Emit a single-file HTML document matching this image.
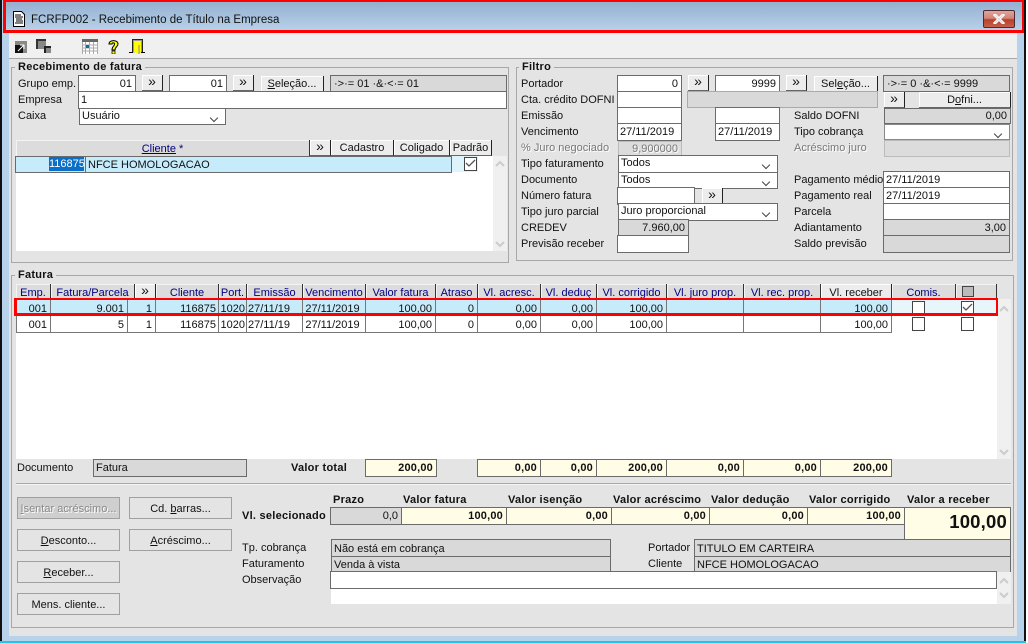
<!DOCTYPE html>
<html><head><meta charset="utf-8">
<style>
html,body{margin:0;padding:0;background:#fff}
#w{position:relative;width:1028px;height:643px;overflow:hidden;background:#fff;font:11px "Liberation Sans",sans-serif;letter-spacing:0;color:#111}
#w div,#w svg{position:absolute;box-sizing:border-box;white-space:nowrap}
.l{height:14px;line-height:14px;margin-top:1px}
.d{color:#777;text-shadow:1px 1px 0 #fff}
.b{font-weight:bold;letter-spacing:.26px}
.i,.g,.y,.s{border:1px solid #6b6b6b;background:#fff;line-height:16px;padding:0 3px;overflow:hidden}
.g{background:#d9d9d9}
.y{background:#fffde6;font-weight:bold;text-align:right;padding-right:3px;letter-spacing:.2px}
.r{text-align:right}
.s{padding-right:18px}
.s:after{content:"";position:absolute;right:8px;top:6px;width:5px;height:5px;border-right:1px solid #444;border-bottom:1px solid #444;transform:rotate(45deg)}
.btn{background:#ececec;border-right:1px solid #222;border-bottom:1px solid #666;box-shadow:inset 1px 1px 0 #fff;text-align:center;line-height:17px}
.x{font-size:14px;line-height:12px}
.h{background:#dcdcdc;color:#000080;text-align:center;line-height:18px;border-right:1px solid #333;box-shadow:inset 1px 1px 0 #f4f4f4;overflow:hidden}
.c{border-right:1px solid #777;border-bottom:1px solid #777;text-align:right;padding-right:3px;line-height:18px;overflow:hidden}
.p{background:#e4e4e4;border:1px solid #a0a0a0;text-align:center;line-height:22px}
.ck{width:13px;height:14px;border:1px solid #444;background:#fff}
.gb{border:1px solid #a8a8a8}
.gt{background:#e4e4e4;font-weight:bold;line-height:14px;padding:0 3px;letter-spacing:.26px}
.red{background:#f00}
u{text-decoration:underline}
</style></head><body><div id="w">
<!-- frame -->
<div style="left:0;top:0;width:2px;height:643px;background:#111"></div>
<div style="left:2px;top:0;width:1023px;height:641px;background:#b8d2ec"></div>
<div style="left:1024px;top:0;width:2px;height:643px;background:#111"></div>
<div style="left:0;top:641px;width:1026px;height:2px;background:#1fc6e6"></div>
<div style="left:4px;top:2px;width:1018px;height:29px;background:linear-gradient(#95b0d0,#b8d2ea)"></div>
<div style="left:9px;top:33px;width:1008px;height:603px;background:#e4e4e4"></div>
<div style="left:9px;top:33px;width:1008px;height:26px;background:#f0f0f0;border-bottom:1px solid #a8a8a8"></div>
<!-- title -->
<svg style="left:13px;top:11px" width="12" height="16" viewBox="0 0 12 16"><path d="M.5.5h8l3 3v12H.5z" fill="#fff" stroke="#000"/><path d="M2 4h6M2 6h8M3 8h6M3 10h7M2 12h8" stroke="#000" stroke-width="1"/></svg>
<div class="l" style="left:31px;top:12px;font-size:11.5px;color:#111">FCRFP002 - Recebimento de Título na Empresa</div>
<div style="left:983px;top:10px;width:32px;height:18px;border:1px solid #4c2a30;border-radius:2px;background:linear-gradient(#e0a49a 0,#d28577 45%,#b8402c 55%,#c4604c 100%)"></div>
<svg style="left:993px;top:14px" width="12" height="10" viewBox="0 0 12 10"><path d="M2 1l8 8M10 1l-8 8" stroke="#fff" stroke-width="3" stroke-linecap="square"/><path d="M2 1l8 8M10 1l-8 8" stroke="#d8d8d8" stroke-width="1"/></svg>
<div class="red" style="left:3px;top:0;width:1021px;height:2px"></div>
<div class="red" style="left:3px;top:30px;width:1021px;height:3px"></div>
<div class="red" style="left:3px;top:0;width:3px;height:33px"></div>
<div class="red" style="left:1022px;top:0;width:2px;height:33px"></div>
<!-- toolbar icons -->
<svg style="left:15px;top:41px" width="12" height="12" viewBox="0 0 12 12"><rect width="12" height="12" fill="#888"/><rect x="0" y="4" width="8" height="8" fill="#111"/><path d="M3 10l6-6M5 4h4v4" stroke="#fff" fill="none"/></svg>
<svg style="left:36px;top:39px" width="15" height="14" viewBox="0 0 15 14"><rect width="10" height="10" fill="#888"/><path d="M0 0h10v2H2v8H0z" fill="#333"/><rect x="8" y="7" width="7" height="7" fill="#888"/><path d="M8 7h7v2h-5v5H8z" fill="#222"/></svg>
<svg style="left:82px;top:39px" width="16" height="15" viewBox="0 0 16 15"><rect width="16" height="15" fill="#fff"/><rect width="16" height="3" fill="#666"/><path d="M0 6h16M0 9h16M0 12h16M3.500 3v12M7.500 3v12M11.500 3v12M15.500 3v12M.5 3v12" stroke="#aaa"/><rect x="4" y="6" width="3" height="3" fill="#146a9c"/></svg>
<svg style="left:108px;top:40px" width="11" height="14" viewBox="0 0 11 14"><path d="M1 4c0-4.500 9-4.500 9 0 0 3-3 2.500-3 6H4c0-4 2.500-3.500 2.500-6 0-1.500-2.500-1.500-2.500 0z" fill="#ff0" stroke="#000"/><rect x="4" y="11" width="3" height="3" fill="#ff0" stroke="#000" stroke-width=".7"/></svg>
<svg style="left:129px;top:39px" width="16" height="15" viewBox="0 0 16 15"><path d="M3.500 13.500V.5h10v13" fill="#999" stroke="#222"/><path d="M5 2h7v11l-2 2-5-2z" fill="#ff0" stroke="none"/><path d="M10 6v9" stroke="#888"/><path d="M0 13.500h4M12 13.500h4" stroke="#000"/></svg>

<!-- Recebimento de fatura -->
<div class="gb" style="left:11px;top:67px;width:498px;height:196px"></div>
<div class="gt" style="left:15px;top:60px">Recebimento de fatura</div>
<div class="l" style="left:18px;top:76px">Grupo emp.</div>
<div class="l" style="left:18px;top:92px">Empresa</div>
<div class="l" style="left:18px;top:108px">Caixa</div>
<div class="i r" style="left:78px;top:75px;width:58px;height:17px">01</div>
<div class="btn x" style="left:142px;top:75px;width:21px;height:16px">»</div>
<div class="i r" style="left:169px;top:75px;width:58px;height:17px">01</div>
<div class="btn x" style="left:233px;top:75px;width:21px;height:16px">»</div>
<div class="btn" style="left:261px;top:76px;width:63px;height:16px"><u>S</u>eleção...</div>
<div class="g" style="left:330px;top:75px;width:177px;height:17px">·&gt;·= 01 ·&amp;·&lt;·= 01</div>
<div class="i" style="left:78px;top:91px;width:429px;height:18px;padding-left:2px">1</div>
<div class="s" style="left:79px;top:108px;width:147px;height:17px;border:1px solid #6b6b6b;background:#fff;line-height:14px;padding-left:2px">Usuário</div>
<div class="h" style="left:16px;top:140px;width:294px;height:16px"><u>Cliente</u> *</div>
<div class="btn x" style="left:310px;top:140px;width:21px;height:16px">»</div>
<div class="btn" style="left:331px;top:140px;width:63px;height:16px">Cadastro</div>
<div class="btn" style="left:394px;top:140px;width:56px;height:16px">Coligado</div>
<div class="btn" style="left:450px;top:140px;width:42px;height:16px">Padrão</div>
<div style="left:16px;top:156px;width:477px;height:95px;background:#fff"></div>
<div style="left:493px;top:156px;width:14px;height:95px;background:#f0f0f0"></div>
<div style="left:15px;top:156px;width:437px;height:17px;background:#c6ecfb;border:1px solid #6b6b6b"></div>
<div style="left:85px;top:156px;width:1px;height:17px;background:#6b6b6b"></div>
<div style="left:49px;top:157px;width:35px;height:14px;background:#0a6fc8;color:#fff;line-height:14px;text-align:right">116875</div>
<div class="l" style="left:88px;top:157px">NFCE HOMOLOGACAO</div>
<div style="left:452px;top:156px;width:26px;height:16px;background:#dff3fb"></div>
<div class="ck" style="left:464px;top:157px"></div>
<svg style="left:465px;top:159px" width="11" height="10" viewBox="0 0 11 10"><path d="M1 4l3 3 6-6" stroke="#555" stroke-width="1.300" fill="none"/></svg>
<svg style="left:495px;top:160px" width="10" height="8" viewBox="0 0 10 8"><path d="M1 6l4-4 4 4" stroke="#ccc" stroke-width="2" fill="none"/></svg>
<svg style="left:495px;top:240px" width="10" height="8" viewBox="0 0 10 8"><path d="M1 2l4 4 4-4" stroke="#ccc" stroke-width="2" fill="none"/></svg>

<!-- Filtro -->
<div class="gb" style="left:516px;top:67px;width:497px;height:194px"></div>
<div class="gt" style="left:519px;top:60px">Filtro</div>
<div class="l" style="left:521px;top:76px">Portador</div>
<div class="l" style="left:521px;top:92px">Cta. crédito DOFNI</div>
<div class="l" style="left:521px;top:108px">Emissão</div>
<div class="l" style="left:521px;top:124px">Vencimento</div>
<div class="l d" style="left:521px;top:140px">% Juro negociado</div>
<div class="l" style="left:521px;top:156px">Tipo faturamento</div>
<div class="l" style="left:521px;top:172px">Documento</div>
<div class="l" style="left:521px;top:188px">Número fatura</div>
<div class="l" style="left:521px;top:204px">Tipo juro parcial</div>
<div class="l" style="left:521px;top:220px">CREDEV</div>
<div class="l" style="left:521px;top:236px">Previsão receber</div>
<div class="l" style="left:794px;top:108px">Saldo DOFNI</div>
<div class="l" style="left:794px;top:124px">Tipo cobrança</div>
<div class="l d" style="left:794px;top:140px">Acréscimo juro</div>
<div class="l" style="left:794px;top:172px">Pagamento médio</div>
<div class="l" style="left:794px;top:188px">Pagamento real</div>
<div class="l" style="left:794px;top:204px">Parcela</div>
<div class="l" style="left:794px;top:220px">Adiantamento</div>
<div class="l" style="left:794px;top:236px">Saldo previsão</div>
<div class="i r" style="left:617px;top:75px;width:65px;height:17px">0</div>
<div class="btn x" style="left:688px;top:75px;width:21px;height:16px">»</div>
<div class="i r" style="left:715px;top:75px;width:65px;height:17px">9999</div>
<div class="btn x" style="left:786px;top:75px;width:21px;height:16px">»</div>
<div class="btn" style="left:814px;top:76px;width:64px;height:16px">Sel<u>e</u>ção...</div>
<div class="g" style="left:883px;top:75px;width:127px;height:17px">·&gt;·= 0 ·&amp;·&lt;·= 9999</div>
<div class="i" style="left:617px;top:91px;width:65px;height:17px"></div>
<div class="g" style="left:687px;top:91px;width:191px;height:17px;border-color:#aaa"></div>
<div class="btn x" style="left:884px;top:92px;width:21px;height:16px">»</div>
<div class="btn" style="left:919px;top:92px;width:92px;height:16px">D<u>o</u>fni...</div>
<div class="i" style="left:617px;top:107px;width:65px;height:17px"></div>
<div class="i" style="left:715px;top:107px;width:65px;height:17px"></div>
<div class="g r" style="left:884px;top:108px;width:127px;height:16px;line-height:15px">0,00</div>
<div class="i" style="left:617px;top:123px;width:65px;height:18px;padding-left:2px">27/11/2019</div>
<div class="i" style="left:715px;top:123px;width:65px;height:18px;padding-left:2px">27/11/2019</div>
<div class="s" style="left:884px;top:124px;width:126px;height:16px;border:1px solid #888;background:#fff"></div>
<div class="g r d" style="left:618px;top:141px;width:64px;height:16px;border-color:#bbb;line-height:15px;background:#dcdcdc">9,900000</div>
<div class="g" style="left:884px;top:140px;width:126px;height:17px;border-color:#bbb;background:#dcdcdc"></div>
<div class="s" style="left:618px;top:155px;width:160px;height:18px;line-height:15px;padding-left:2px;border:1px solid #6b6b6b;background:#fff">Todos</div>
<div class="s" style="left:618px;top:172px;width:160px;height:17px;line-height:14px;padding-left:2px;border:1px solid #6b6b6b;background:#fff">Todos</div>
<div class="i" style="left:617px;top:187px;width:78px;height:18px"></div>
<div class="btn x" style="left:702px;top:188px;width:21px;height:16px">»</div>
<div class="s" style="left:618px;top:203px;width:160px;height:18px;line-height:15px;padding-left:2px;border:1px solid #6b6b6b;background:#fff">Juro proporcional</div>
<div class="g r" style="left:618px;top:219px;width:71px;height:17px;line-height:16px">7.960,00</div>
<div class="i" style="left:617px;top:235px;width:72px;height:18px"></div>
<div class="i" style="left:883px;top:171px;width:127px;height:17px;padding-left:2px">27/11/2019</div>
<div class="i" style="left:883px;top:187px;width:127px;height:17px;padding-left:2px">27/11/2019</div>
<div class="i" style="left:883px;top:203px;width:127px;height:17px"></div>
<div class="g r" style="left:883px;top:219px;width:127px;height:17px">3,00</div>
<div class="g" style="left:883px;top:235px;width:127px;height:18px"></div>

<!-- Fatura -->
<div class="gb" style="left:11px;top:275px;width:1003px;height:353px"></div>
<div class="gt" style="left:15px;top:268px">Fatura</div>
<div class="h" style="left:16px;top:284px;width:35px;height:15px">Emp.</div>
<div class="h" style="left:51px;top:284px;width:84px;height:15px">Fatura/Parcela</div>
<div class="btn x" style="left:135px;top:284px;width:21px;height:15px">»</div>
<div class="h" style="left:156px;top:284px;width:63px;height:15px">Cliente</div>
<div class="h" style="left:219px;top:284px;width:28px;height:15px">Port.</div>
<div class="h" style="left:247px;top:284px;width:56px;height:15px">Emissão</div>
<div class="h" style="left:303px;top:284px;width:63px;height:15px">Vencimento</div>
<div class="h" style="left:366px;top:284px;width:70px;height:15px">Valor fatura</div>
<div class="h" style="left:436px;top:284px;width:42px;height:15px">Atraso</div>
<div class="h" style="left:478px;top:284px;width:63px;height:15px">Vl. acresc.</div>
<div class="h" style="left:541px;top:284px;width:56px;height:15px">Vl. deduç</div>
<div class="h" style="left:597px;top:284px;width:70px;height:15px">Vl. corrigido</div>
<div class="h" style="left:667px;top:284px;width:77px;height:15px">Vl. juro prop.</div>
<div class="h" style="left:744px;top:284px;width:77px;height:15px">Vl. rec. prop.</div>
<div class="btn" style="left:821px;top:284px;width:71px;height:15px;line-height:18px">Vl. receber</div>
<div class="h" style="left:892px;top:284px;width:64px;height:15px">Comis.</div>
<div class="h" style="left:956px;top:284px;width:41px;height:15px"></div>
<div style="left:962px;top:286px;width:12px;height:11px;background:#bbb;border:1px solid #444"></div>
<div style="left:16px;top:299px;width:981px;height:160px;background:#fff"></div>
<div style="left:997px;top:299px;width:14px;height:160px;background:#f0f0f0"></div>
<!-- rows -->
<div style="left:16px;top:299px;width:876px;height:17px;background:#c6ecfb"></div>
<div style="left:892px;top:299px;width:105px;height:17px;background:#e8f6fc"></div>
<div class="c" style="left:16px;top:300px;width:35px;height:16px">001</div>
<div class="c" style="left:51px;top:300px;width:77px;height:16px">9.001</div>
<div class="c" style="left:128px;top:300px;width:28px;height:16px">1</div>
<div class="c" style="left:156px;top:300px;width:63px;height:16px;padding-right:2px">116875</div>
<div class="c" style="left:219px;top:300px;width:28px;height:16px;padding-right:1px">1020</div>
<div class="c" style="left:247px;top:300px;width:56px;height:16px;text-align:left;padding-left:1px">27/11/19</div>
<div class="c" style="left:303px;top:300px;width:63px;height:16px;text-align:center">27/11/2019</div>
<div class="c" style="left:366px;top:300px;width:70px;height:16px">100,00</div>
<div class="c" style="left:436px;top:300px;width:42px;height:16px">0</div>
<div class="c" style="left:478px;top:300px;width:63px;height:16px">0,00</div>
<div class="c" style="left:541px;top:300px;width:56px;height:16px">0,00</div>
<div class="c" style="left:597px;top:300px;width:70px;height:16px">100,00</div>
<div class="c" style="left:667px;top:300px;width:77px;height:16px"></div>
<div class="c" style="left:744px;top:300px;width:77px;height:16px"></div>
<div class="c" style="left:821px;top:300px;width:71px;height:16px">100,00</div>
<div class="ck" style="left:912px;top:301px"></div>
<div class="ck" style="left:961px;top:301px"></div>
<svg style="left:962px;top:303px" width="11" height="10" viewBox="0 0 11 10"><path d="M1 4l3 3 6-6" stroke="#555" stroke-width="1.300" fill="none"/></svg>
<div class="c" style="left:16px;top:316px;width:35px;height:17px">001</div>
<div class="c" style="left:51px;top:316px;width:77px;height:17px">5</div>
<div class="c" style="left:128px;top:316px;width:28px;height:17px">1</div>
<div class="c" style="left:156px;top:316px;width:63px;height:17px;padding-right:2px">116875</div>
<div class="c" style="left:219px;top:316px;width:28px;height:17px;padding-right:1px">1020</div>
<div class="c" style="left:247px;top:316px;width:56px;height:17px;text-align:left;padding-left:1px">27/11/19</div>
<div class="c" style="left:303px;top:316px;width:63px;height:17px;text-align:center">27/11/2019</div>
<div class="c" style="left:366px;top:316px;width:70px;height:17px">100,00</div>
<div class="c" style="left:436px;top:316px;width:42px;height:17px">0</div>
<div class="c" style="left:478px;top:316px;width:63px;height:17px">0,00</div>
<div class="c" style="left:541px;top:316px;width:56px;height:17px">0,00</div>
<div class="c" style="left:597px;top:316px;width:70px;height:17px">100,00</div>
<div class="c" style="left:667px;top:316px;width:77px;height:17px"></div>
<div class="c" style="left:744px;top:316px;width:77px;height:17px"></div>
<div class="c" style="left:821px;top:316px;width:71px;height:17px">100,00</div>
<div class="ck" style="left:912px;top:317px"></div>
<div class="ck" style="left:961px;top:317px"></div>
<div style="left:16px;top:316px;width:1px;height:17px;background:#777"></div>
<!-- red row outline -->
<div class="red" style="left:14px;top:298px;width:984px;height:2px"></div>
<div class="red" style="left:14px;top:313px;width:984px;height:3px"></div>
<div class="red" style="left:14px;top:298px;width:3px;height:18px"></div>
<div class="red" style="left:996px;top:298px;width:2px;height:18px"></div>
<svg style="left:999px;top:305px" width="10" height="8" viewBox="0 0 10 8"><path d="M1 6l4-4 4 4" stroke="#ccc" stroke-width="2" fill="none"/></svg>
<svg style="left:999px;top:448px" width="10" height="8" viewBox="0 0 10 8"><path d="M1 2l4 4 4-4" stroke="#ccc" stroke-width="2" fill="none"/></svg>
<!-- totals -->
<div class="l" style="left:17px;top:460px">Documento</div>
<div class="g" style="left:93px;top:459px;width:154px;height:18px;padding-left:2px;line-height:17px">Fatura</div>
<div class="l b" style="left:291px;top:460px">Valor total</div>
<div class="y" style="left:365px;top:459px;width:72px;height:18px">200,00</div>
<div class="y" style="left:477px;top:459px;width:64px;height:18px">0,00</div>
<div class="y" style="left:540px;top:459px;width:57px;height:18px">0,00</div>
<div class="y" style="left:596px;top:459px;width:71px;height:18px">200,00</div>
<div class="y" style="left:666px;top:459px;width:78px;height:18px">0,00</div>
<div class="y" style="left:743px;top:459px;width:78px;height:18px">0,00</div>
<div class="y" style="left:820px;top:459px;width:72px;height:18px">200,00</div>
<div style="left:16px;top:483px;width:995px;height:1px;background:#a8a8a8;box-shadow:0 1px 0 #f4f4f4"></div>
<!-- buttons -->
<div class="p d" style="left:17px;top:497px;width:103px;height:22px;background:#cfcfcf;color:#888"><u>I</u>sentar acréscimo...</div>
<div class="p" style="left:129px;top:497px;width:103px;height:22px">Cd. <u>b</u>arras...</div>
<div class="p" style="left:17px;top:529px;width:103px;height:22px"><u>D</u>esconto...</div>
<div class="p" style="left:129px;top:529px;width:103px;height:22px"><u>A</u>créscimo...</div>
<div class="p" style="left:17px;top:561px;width:103px;height:22px"><u>R</u>eceber...</div>
<div class="p" style="left:17px;top:593px;width:103px;height:22px">Mens. cliente...</div>
<!-- summary -->
<div class="l b" style="left:333px;top:492px">Prazo</div>
<div class="l b" style="left:403px;top:492px">Valor fatura</div>
<div class="l b" style="left:508px;top:492px">Valor isenção</div>
<div class="l b" style="left:613px;top:492px">Valor acréscimo</div>
<div class="l b" style="left:711px;top:492px">Valor dedução</div>
<div class="l b" style="left:809px;top:492px">Valor corrigido</div>
<div class="l b" style="left:907px;top:492px">Valor a receber</div>
<div class="l b" style="left:242px;top:508px">Vl. selecionado</div>
<div class="g r" style="left:330px;top:507px;width:72px;height:18px">0,0</div>
<div class="y" style="left:401px;top:507px;width:106px;height:18px">100,00</div>
<div class="y" style="left:506px;top:507px;width:106px;height:18px">0,00</div>
<div class="y" style="left:611px;top:507px;width:99px;height:18px">0,00</div>
<div class="y" style="left:709px;top:507px;width:99px;height:18px">0,00</div>
<div class="y" style="left:807px;top:507px;width:98px;height:18px">100,00</div>
<div class="y" style="left:904px;top:507px;width:107px;height:33px;font-size:18.500px;line-height:28px;letter-spacing:.2px;padding-right:3px">100,00</div>
<div class="l" style="left:242px;top:540px">Tp. cobrança</div>
<div class="l" style="left:242px;top:556px">Faturamento</div>
<div class="l" style="left:242px;top:572px">Observação</div>
<div class="g" style="left:331px;top:539px;width:280px;height:18px;padding-left:2px;line-height:18px">Não está em cobrança</div>
<div class="g" style="left:331px;top:556px;width:280px;height:16px;padding-left:2px;border-bottom:0">Venda à vista</div>
<div class="l" style="left:648px;top:540px">Portador</div>
<div class="l" style="left:648px;top:556px">Cliente</div>
<div class="g" style="left:694px;top:539px;width:317px;height:18px;padding-left:2px;line-height:18px">TITULO EM CARTEIRA</div>
<div class="g" style="left:694px;top:556px;width:317px;height:16px;padding-left:2px;border-bottom:0">NFCE HOMOLOGACAO</div>
<div style="left:331px;top:589px;width:666px;height:15px;background:#fff"></div>
<div style="left:997px;top:572px;width:14px;height:32px;background:#f0f0f0"></div>
<div class="i" style="left:330px;top:571px;width:667px;height:18px"></div>
<svg style="left:999px;top:577px" width="10" height="8" viewBox="0 0 10 8"><path d="M1 6l4-4 4 4" stroke="#ccc" stroke-width="2" fill="none"/></svg>
<svg style="left:999px;top:591px" width="10" height="8" viewBox="0 0 10 8"><path d="M1 2l4 4 4-4" stroke="#ccc" stroke-width="2" fill="none"/></svg>
</div></body></html>
